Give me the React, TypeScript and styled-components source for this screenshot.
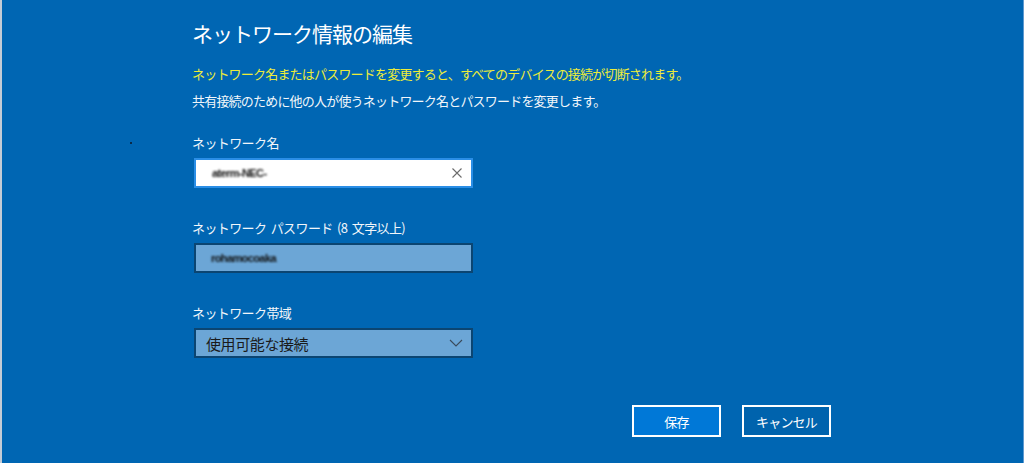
import React from "react";
import styled, { createGlobalStyle } from "styled-components";

const Global = createGlobalStyle`
  html, body { margin: 0; padding: 0; background: #0066b3; }
  body { font-family: "Noto Sans CJK JP", "Noto Sans", sans-serif; }
  * { box-sizing: border-box; }
`;

const Page = styled.div`
  position: relative;
  width: 1024px;
  height: 463px;
  background: #0066b3;
  border-left: 2px solid #c4ccd6;
  border-right: 1px solid #5f9ad0;
  overflow: hidden;
  display: flex;
  flex-direction: column;
  padding: 19px 0 0 190px;
  color: #ffffff;
`;

const Title = styled.h1`
  margin: 0;
  font-size: 21px;
  font-weight: 400;
  line-height: 28px;
  letter-spacing: -1px;
  color: #ffffff;
`;

const Desc = styled.div`
  margin-top: 13px;
  display: flex;
  flex-direction: column;
`;

const Line = styled.p<{ $warn?: boolean }>`
  margin: 0;
  font-size: 13px;
  line-height: 27px;
  letter-spacing: -0.8px;
  color: ${(p) => (p.$warn ? "#ecec3a" : "#f2f6fa")};
`;

const Fields = styled.div`
  margin-top: 19px;
  display: flex;
  flex-direction: column;
  gap: 30px;
`;

const Field = styled.div`
  display: flex;
  flex-direction: column;
  gap: 5px;
`;

const Label = styled.label`
  font-size: 13px;
  line-height: 20px;
  letter-spacing: -0.6px;
  word-spacing: 2px;
  color: #f2f6fa;
`;

const Box = styled.div<{ $active?: boolean }>`
  margin-left: 2px;
  width: 279px;
  height: 30px;
  display: flex;
  align-items: center;
  justify-content: space-between;
  padding: 0 8px 0 10px;
  border: 2px solid ${(p) => (p.$active ? "#2a8ee6" : "#0b4572")};
  background: ${(p) => (p.$active ? "#ffffff" : "#6ca6d6")};
`;

const Blurred = styled.span<{ $pad: number }>`
  display: inline-block;
  margin-left: ${(p) => p.$pad}px;
  font-family: "Liberation Sans", sans-serif;
  font-size: 11px;
  font-weight: 700;
  letter-spacing: -0.6px;
  color: #111;
  filter: blur(0.8px);
`;

const SelectText = styled.span`
  font-size: 15px;
  letter-spacing: -0.4px;
  color: #1a1a1a;
`;

const Icon = styled.svg`
  flex: none;
`;

const Actions = styled.div`
  margin-top: 47px;
  margin-left: 440px;
  display: flex;
  gap: 21px;
`;

const Button = styled.button<{ $primary?: boolean }>`
  width: 89px;
  height: 32px;
  border: 2px solid #ffffff;
  background: ${(p) => (p.$primary ? "#0078d7" : "#0063ad")};
  color: #ffffff;
  font-family: "Noto Sans CJK JP", sans-serif;
  font-size: 13px;
  letter-spacing: -0.8px;
  padding: 0;
  cursor: pointer;
`;

const Speck = styled.span`
  position: absolute;
  left: 128px;
  top: 142px;
  width: 2px;
  height: 2px;
  background: #0a2a48;
`;

export default function App() {
  return (
    <>
      <Global />
      <Page>
        <Speck />
        <Title>ネットワーク情報の編集</Title>
        <Desc>
          <Line $warn>ネットワーク名またはパスワードを変更すると、すべてのデバイスの接続が切断されます。</Line>
          <Line>共有接続のために他の人が使うネットワーク名とパスワードを変更します。</Line>
        </Desc>
        <Fields>
          <Field>
            <Label>ネットワーク名</Label>
            <Box $active>
              <Blurred $pad={6}>aterm-NEC-</Blurred>
              <Icon width="12" height="12" viewBox="0 0 12 12">
                <path d="M1.5 1.5 L10.5 10.5 M10.5 1.5 L1.5 10.5" stroke="#6b6b6b" strokeWidth="1.1" fill="none" />
              </Icon>
            </Box>
          </Field>
          <Field>
            <Label>ネットワーク パスワード (8 文字以上)</Label>
            <Box>
              <Blurred $pad={5}>rohamocoaka</Blurred>
            </Box>
          </Field>
          <Field>
            <Label>ネットワーク帯域</Label>
            <Box>
              <SelectText>使用可能な接続</SelectText>
              <Icon width="14" height="8" viewBox="0 0 14 8">
                <path d="M1 1 L7 7 L13 1" stroke="#3a4a5a" strokeWidth="1.1" fill="none" />
              </Icon>
            </Box>
          </Field>
        </Fields>
        <Actions>
          <Button $primary>保存</Button>
          <Button>キャンセル</Button>
        </Actions>
      </Page>
    </>
  );
}
